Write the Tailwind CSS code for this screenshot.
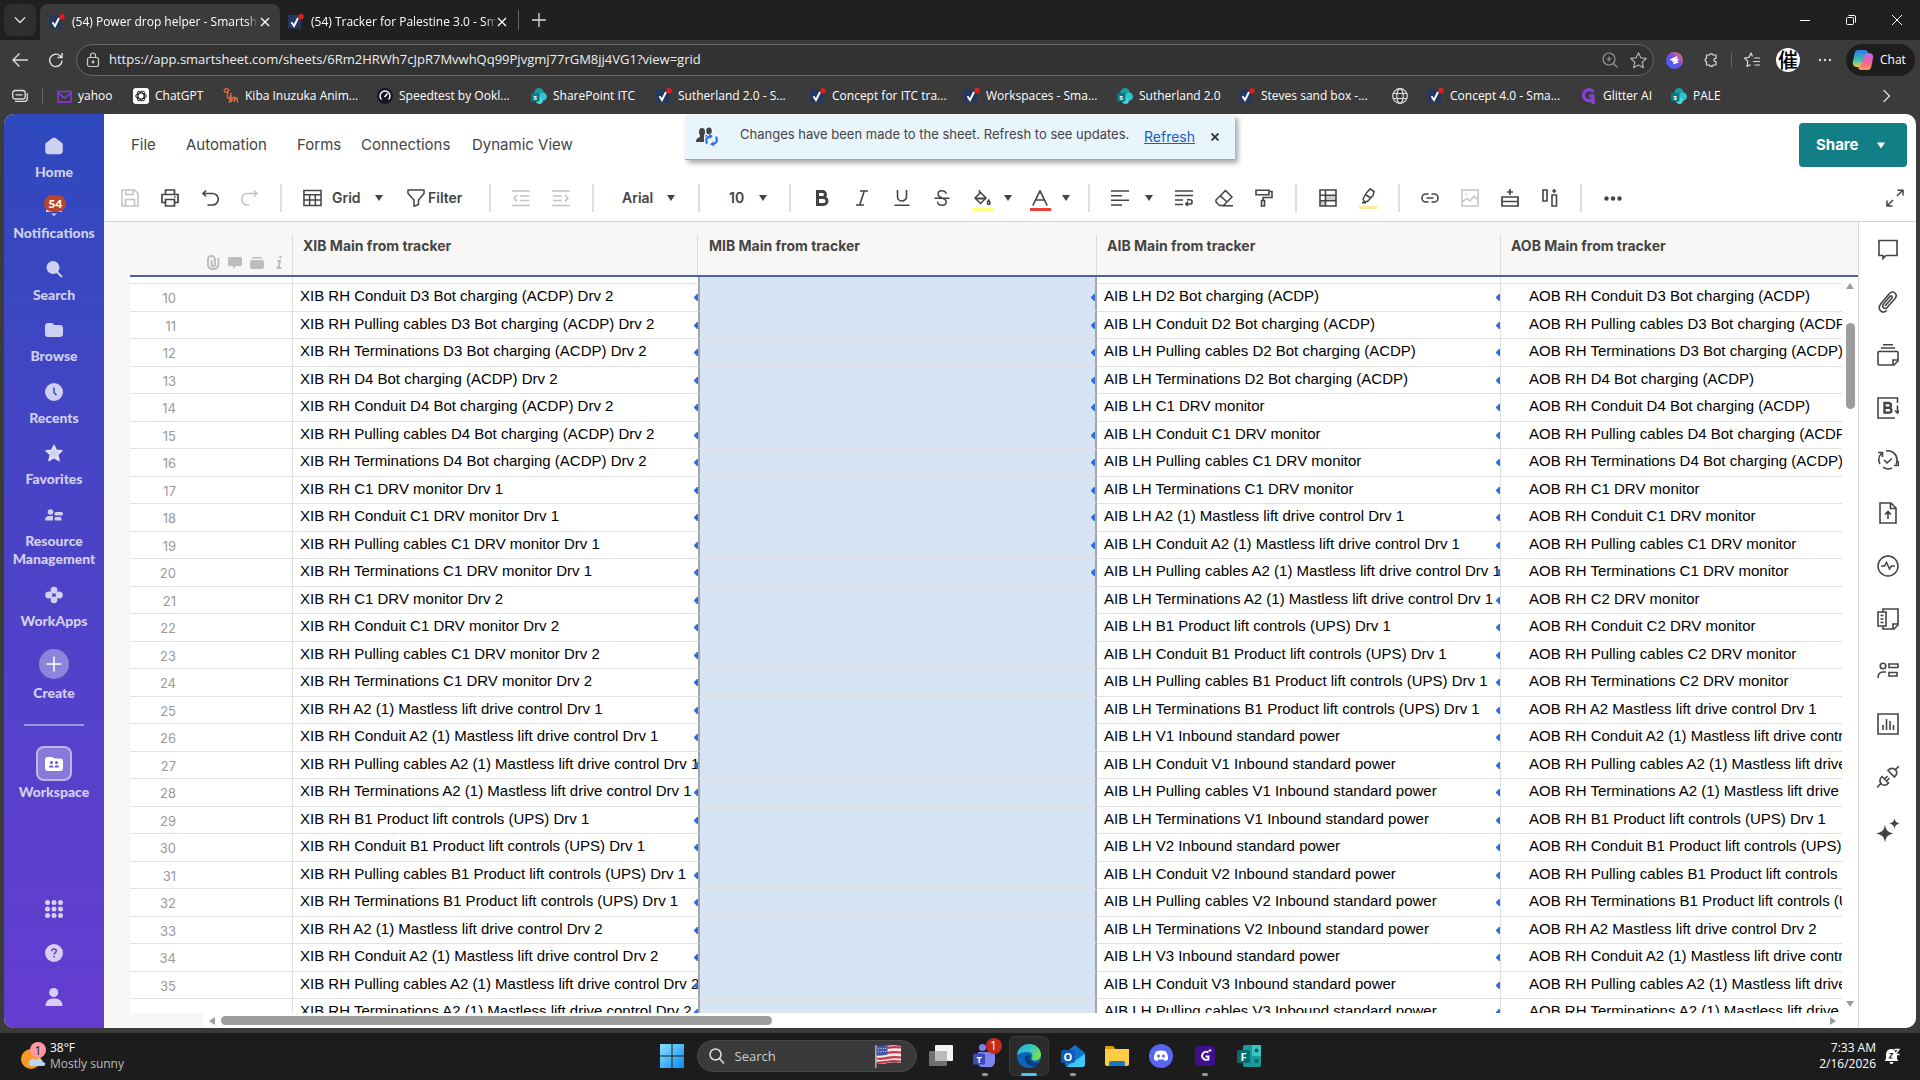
<!DOCTYPE html>
<html lang="en">
<head>
<meta charset="utf-8">
<title>(54) Power drop helper - Smartsheet</title>
<script src="https://cdn.jsdelivr.net/npm/@tailwindcss/browser@4"></script>
</head>
<body class="flex h-screen flex-col overflow-hidden bg-[#3b3b3b] font-['Open_Sans',sans-serif] text-white">

<!-- Shared symbols -->
<svg class="hidden" aria-hidden="true">
  <symbol id="smart" viewBox="0 0 16 16"><path d="M0 1h13v15l-3-1.500H0z" fill="#24385f"/><path d="M3.500 8.200 6 12l4-8" fill="none" stroke="#fff" stroke-width="1.900"/><circle cx="13" cy="2.700" r="2.700" fill="#e02020"/></symbol>
  <symbol id="sp" viewBox="0 0 16 16"><circle cx="8" cy="4.800" r="4.800" fill="#1b9aa5"/><circle cx="11.800" cy="8.600" r="4.200" fill="#2fc4cd"/><circle cx="8.500" cy="12.500" r="3.400" fill="#49d5dc"/><rect y="5" width="8.400" height="8.400" rx="1" fill="#057b86"/><text x="4.200" y="11.900" font-size="7.500" font-weight="700" text-anchor="middle" fill="#fff">s</text></symbol>
  <symbol id="caret" viewBox="0 0 8 6"><path d="M0 0h8L4 6z" fill="currentColor"/></symbol>
</svg>

<!-- Tab strip -->
<header class="flex h-10 shrink-0 bg-[#202020] text-xs">
  <button class="mt-1 ml-1 flex h-8 w-8 items-center justify-center rounded-lg bg-[#2f2f2f]" aria-label="Tab actions"><svg class="h-3 w-3" viewBox="0 0 12 12" fill="none" stroke="#ddd" stroke-width="1.400"><path d="M1 3.500 6 8.500l5-5"/></svg></button>
  <div class="mt-1 ml-1 flex w-60 items-center rounded-t-lg bg-[#3b3b3b] pr-2.5 pl-[9px]">
    <svg class="h-4 w-4 shrink-0"><use href="#smart"/></svg>
    <span class="ml-[7px] w-[186px] overflow-hidden whitespace-nowrap [mask-image:linear-gradient(90deg,#000_94%,transparent)]">(54) Power drop helper - Smartsheet</span>
    <button class="ml-auto" aria-label="Close tab"><svg class="h-2.5 w-2.5" viewBox="0 0 10 10" stroke="#fff" stroke-width="1.300"><path d="M1 1l8 8M9 1 1 9"/></svg></button>
  </div>
  <div class="mt-1 flex w-[238px] items-center border-r border-transparent pr-2.5 pl-2">
    <svg class="h-4 w-4 shrink-0"><use href="#smart"/></svg>
    <span class="ml-[7px] w-[186px] overflow-hidden whitespace-nowrap [mask-image:linear-gradient(90deg,#000_94%,transparent)]">(54) Tracker for Palestine 3.0 - Smartsheet</span>
    <button class="ml-auto" aria-label="Close tab"><svg class="h-2.5 w-2.5" viewBox="0 0 10 10" stroke="#fff" stroke-width="1.300"><path d="M1 1l8 8M9 1 1 9"/></svg></button>
  </div>
  <div class="mt-2.5 h-5 w-px bg-[#666]"></div>
  <button class="flex w-10 items-center justify-center" aria-label="New tab"><svg class="h-4 w-4" viewBox="0 0 16 16" stroke="#ddd" stroke-width="1.300"><path d="M8 1v14M1 8h14"/></svg></button>
  <div class="ml-auto flex">
    <button class="flex w-[46px] items-center justify-center" aria-label="Minimize"><svg class="h-2.5 w-2.5" viewBox="0 0 10 10" stroke="#fff"><path d="M0 5.500h10"/></svg></button>
    <button class="flex w-[46px] items-center justify-center" aria-label="Restore"><svg class="h-2.5 w-2.5" viewBox="0 0 10 10" fill="none" stroke="#fff"><rect x=".5" y="2.500" width="7" height="7" rx="1"/><path d="M2.500.5H8A1.500 1.500 0 0 1 9.500 2v5.500"/></svg></button>
    <button class="flex w-[46px] items-center justify-center" aria-label="Close window"><svg class="h-2.5 w-2.5" viewBox="0 0 10 10" stroke="#fff"><path d="M0 0l10 10M10 0 0 10"/></svg></button>
  </div>
</header>

<!-- Address row -->
<div class="flex h-10 shrink-0 items-center">
  <button class="ml-3 h-4 w-4" aria-label="Back"><svg viewBox="0 0 16 16" fill="none" stroke="#ddd" stroke-width="1.400"><path d="M16 8H1M7.500 1.500 1 8l6.500 6.500"/></svg></button>
  <button class="ml-5 h-4 w-4" aria-label="Reload"><svg viewBox="0 0 16 16" fill="none" stroke="#ddd" stroke-width="1.400"><path d="M14 8.500A6.200 6.200 0 1 1 12 3.800l2 1.700M14 1v4.500H9.500"/></svg></button>
  <div class="ml-3 flex h-8 min-w-0 flex-1 items-center rounded-full border border-[#666] bg-[#323232] pr-1.5 pl-2">
    <svg class="h-4 w-4 shrink-0" viewBox="0 0 16 16" fill="none" stroke="#ccc" stroke-width="1.200"><rect x="2.500" y="5.500" width="11" height="9" rx="2"/><path d="M5.500 5.500V3.500a2.500 2.500 0 0 1 5 0v2"/><circle cx="8" cy="10" r=".8" fill="#ccc"/></svg>
    <label class="sr-only" for="url">Address</label>
    <input id="url" class="ml-2 min-w-0 flex-1 bg-transparent text-[13px] text-[#eee] outline-none" value="https://app.smartsheet.com/sheets/6Rm2HRWh7cJpR7MvwhQq99Pjvgmj77rGM8jj4VG1?view=grid">
    <svg class="h-4 w-4" viewBox="0 0 16 16" fill="none" stroke="#999" stroke-width="1.200"><circle cx="7" cy="7" r="6"/><path d="m11.500 11.500 4 4M7 4.500v5M4.500 7h5"/></svg>
    <svg class="ml-3 h-[17px] w-[17px]" viewBox="0 0 16 16" fill="none" stroke="#aaa" stroke-width="1.200"><path d="m8 .8 2.200 4.700 5.100.6-3.800 3.500 1 5.100L8 12.200l-4.500 2.500 1-5.100L.7 6.100l5.100-.6z" stroke-linejoin="round"/></svg>
  </div>
  <svg class="ml-3 h-[17px] w-[17px]" viewBox="0 0 16 16"><defs><linearGradient id="ext" x1="1" x2="0" y2="1"><stop stop-color="#ff7a59"/><stop offset=".5" stop-color="#6f4be8"/><stop offset="1" stop-color="#2b6cff"/></linearGradient></defs><circle cx="8" cy="8" r="8" fill="url(#ext)"/><path d="m4 7.500 6.500-2.800L6 8.800l5.500-2L7 10.800l4.500-1.300" fill="none" stroke="#fff" stroke-width="1.500"/></svg>
  <svg class="ml-5 h-4 w-4" viewBox="0 0 16 16" fill="none" stroke="#ddd" stroke-width="1.200"><path d="M3.500 3h3a1.800 1.800 0 0 1 3.500 0h3v3.500a1.600 1.600 0 1 0 0 3V13h-3a1.800 1.800 0 0 1-3.500 0h-3V9.700a1.800 1.800 0 0 1 0-3.500z" stroke-linejoin="round"/></svg>
  <div class="ml-3 h-4 w-px bg-[#666]"></div>
  <svg class="ml-3 h-4 w-4" viewBox="0 0 16 16" fill="none" stroke="#ddd" stroke-width="1.200"><path d="M8.500 4.500 7 1 5 5.300.5 6l3.300 3.300L3 14.500l3.500-2" stroke-linejoin="round"/><path d="M10 6h6M9 9.500h7M10.500 13H16"/></svg>
  <span class="ml-4 flex h-6 w-6 items-center justify-center overflow-hidden rounded-full bg-white font-['Noto_Sans_CJK_SC',sans-serif] text-xl leading-6 font-medium text-black">催</span>
  <button class="ml-[18px] w-3.5" aria-label="More"><svg viewBox="0 0 14 4" fill="#ddd"><circle cx="2" cy="2" r="1.200"/><circle cx="7" cy="2" r="1.200"/><circle cx="12" cy="2" r="1.200"/></svg></button>
  <button class="mr-[5px] ml-3.5 flex h-8 w-[69px] items-center gap-1.5 rounded-full bg-[#1d1d1d] pl-1.5 text-xs">
    <svg class="h-[22px] w-[22px]" viewBox="0 0 22 22"><defs><linearGradient id="c1" y2="1" x2="0"><stop stop-color="#2b7ce9"/><stop offset=".6" stop-color="#3cc0b0"/><stop offset="1" stop-color="#f5d040"/></linearGradient><linearGradient id="c2" y2="1" x2="0"><stop stop-color="#b06bf0"/><stop offset=".5" stop-color="#f0609a"/><stop offset="1" stop-color="#ff9a4d"/></linearGradient></defs><path d="M6 1h7c2 0 2.500 1.200 3 3-2 0-3 1-3.700 3.500L10 15c-.5 2-2 3-4 3-4 0-6-2-5-6l1.500-7C3.200 2 4.200 1 6 1z" fill="url(#c1)"/><path d="M16 21H9c-2 0-2.500-1.200-3-3 2 0 3-1 3.700-3.500L12 7.500c.5-2 1.500-3.500 3.500-3.500 4.500 0 6.500 2 5.500 5l-1.500 8c-.8 3-2 4-3.500 4z" fill="url(#c2)"/></svg>Chat</button>
</div>

<!-- Bookmarks -->
<nav class="flex h-[34px] shrink-0 items-center pb-0.5 text-xs whitespace-nowrap">
  <svg class="ml-3 h-4 w-4 shrink-0" viewBox="0 0 16 16" fill="none" stroke="#ddd" stroke-width="1.300"><rect x=".7" y="2.500" width="12.500" height="8.500" rx="2.500"/><path d="M3.500 6.800h7M3 13.300h9.500a2.800 2.800 0 0 0 2.800-2.800V5"/></svg>
  <div class="mr-3.5 ml-3.5 h-4 w-px shrink-0 bg-[#666]"></div>
  <a href="#" class="flex w-[76px] items-center gap-[6px]"><svg class="h-[15px] w-[15px]" viewBox="0 0 15 15" fill="none" stroke="#a02be8" stroke-width="1.500"><path d="M1 2.500h13v10.500H1z"/><path d="m1 4 6.500 5L14 4" stroke="#6f4be8"/></svg>yahoo</a>
  <a href="#" class="flex w-[90px] items-center gap-[6px]"><svg class="h-4 w-4" viewBox="0 0 16 16"><rect width="16" height="16" rx="3" fill="#fff"/><g fill="none" stroke="#222" stroke-width="1"><ellipse cx="8" cy="8" rx="5.300" ry="3"/><ellipse cx="8" cy="8" rx="5.300" ry="3" transform="rotate(60 8 8)"/><ellipse cx="8" cy="8" rx="5.300" ry="3" transform="rotate(120 8 8)"/></g></svg>ChatGPT</a>
  <a href="#" class="flex w-[154px] items-center gap-[6px]"><svg class="h-4 w-4" viewBox="0 0 16 16" fill="none" stroke="#d2693f" stroke-width="1.500"><path d="M5 1C2 0 0 3 2 4s4-1 4-3c-1 3-3 8-1 9s3-3 3-5M6 15c1-2 1-5 2-7 .500 2 0 4 0 6 1-3 2-5 3-5s0 3 0 5c1-3 2-5 3-4s-1 4 1.500 4"/></svg>Kiba Inuzuka Anim...</a>
  <a href="#" class="flex w-[154px] items-center gap-[6px]"><svg class="h-4 w-4" viewBox="0 0 16 16" fill="none" stroke="#fff" stroke-width="1.400"><circle cx="8" cy="8" r="8" fill="#141526" stroke="none"/><path d="M4.500 11.500a5 5 0 1 1 7 0M7.500 9l3-3.500"/></svg>Speedtest by Ookl...</a>
  <a href="#" class="flex w-[125px] items-center gap-[6px]"><svg class="h-4 w-4"><use href="#sp"/></svg>SharePoint ITC</a>
  <a href="#" class="flex w-[154px] items-center gap-[6px]"><svg class="h-4 w-4"><use href="#smart"/></svg>Sutherland 2.0 - S...</a>
  <a href="#" class="flex w-[154px] items-center gap-[6px]"><svg class="h-4 w-4"><use href="#smart"/></svg>Concept for ITC tra...</a>
  <a href="#" class="flex w-[153px] items-center gap-[6px]"><svg class="h-4 w-4"><use href="#smart"/></svg>Workspaces - Sma...</a>
  <a href="#" class="flex w-[122px] items-center gap-[6px]"><svg class="h-4 w-4"><use href="#sp"/></svg>Sutherland 2.0</a>
  <a href="#" class="flex w-[153px] items-center gap-[6px]"><svg class="h-4 w-4"><use href="#smart"/></svg>Steves sand box -...</a>
  <a href="#" class="flex w-9 items-center" aria-label="Site"><svg class="h-4 w-4" viewBox="0 0 16 16" fill="none" stroke="#ddd" stroke-width="1.200"><circle cx="8" cy="8" r="7.300"/><ellipse cx="8" cy="8" rx="3.200" ry="7.300"/><path d="M1.500 5.500h13M1.500 10.500h13"/></svg></a>
  <a href="#" class="flex w-[153px] items-center gap-[6px]"><svg class="h-4 w-4"><use href="#smart"/></svg>Concept 4.0 - Sma...</a>
  <a href="#" class="flex w-[90px] items-center gap-[6px]"><svg class="h-4 w-4" viewBox="0 0 16 16" fill="none" stroke="#8b3fe0" stroke-width="3.200"><path d="M12.500 4A5.500 5.500 0 1 0 12 11V8H8M12 8v6.500h2"/></svg>Glitter AI</a>
  <a href="#" class="flex items-center gap-[6px]"><svg class="h-4 w-4"><use href="#sp"/></svg>PALE</a>
  <button class="mr-7 ml-auto" aria-label="More bookmarks"><svg class="h-3 w-3" viewBox="0 0 12 12" fill="none" stroke="#ddd" stroke-width="1.300"><path d="m3.500 0 6 6-6 6"/></svg></button>
</nav>

<!-- Page -->
<div class="mx-1 flex min-h-0 flex-1 overflow-hidden rounded-[10px] bg-white font-['Inter',sans-serif] text-[#444]">

  <aside class="flex w-[100px] shrink-0 flex-col items-center bg-linear-to-b from-[#2e48be] to-[#643cd0] pt-[17px] font-['Lato',sans-serif] text-sm leading-[18px] font-black text-white/75">
    <a href="#" class="flex h-[61px] flex-col items-center gap-2 pt-1.5"><svg class="h-[18px] w-[18px]" viewBox="0 0 18 18" fill="currentColor"><path d="M9 .5c.6 0 1 .2 1.500.6l6 4.500c.9.700 1.300 1.400 1.300 2.600v5.800c0 2-1.300 3.200-3.200 3.200H3.400C1.500 17.200.2 16 .2 14V8.200c0-1.200.4-1.900 1.300-2.600l6-4.500C8 .7 8.400.5 9 .5z"/></svg>Home</a>
    <a href="#" class="relative flex h-[62px] flex-col items-center gap-2 pt-1.5"><svg class="h-[18px] w-[18px]" viewBox="0 0 18 18" fill="currentColor"><path d="M9 0a6 6 0 0 1 6 6v3l2 3v2H1v-2l2-3V6a6 6 0 0 1 6-6zM6 15.500h6L9 18z"/></svg>Notifications<span class="absolute top-[3px] left-[31px] flex h-[17px] w-[22px] items-center justify-center rounded-full bg-[#b8452f] text-xs leading-none text-white">54</span></a>
    <a href="#" class="flex h-[61px] flex-col items-center gap-2 pt-1.5"><svg class="h-[18px] w-[18px]" viewBox="0 0 18 18" fill="currentColor"><circle cx="8" cy="7.500" r="6.500"/><path d="m12 12 4.500 4.500" stroke="currentColor" stroke-width="2" stroke-linecap="round"/></svg>Search</a>
    <a href="#" class="flex h-[62px] flex-col items-center gap-2 pt-1.5"><svg class="h-[18px] w-[18px]" viewBox="0 0 18 18" fill="currentColor"><path d="M3 2h3.500C8 2 8.500 4 10 4h5c2 0 3 1 3 3v6c0 2-1 3-3 3H3c-2 0-3-1-3-3V5c0-2 1-3 3-3z"/></svg>Browse</a>
    <a href="#" class="flex h-[61px] flex-col items-center gap-2 pt-1.5"><svg class="h-[18px] w-[18px]" viewBox="0 0 18 18"><circle cx="9" cy="9" r="9" fill="currentColor"/><path d="M9 4.500v5.300l2.500 2.500" fill="none" stroke="#3b44c3" stroke-width="1.500"/></svg>Recents</a>
    <a href="#" class="flex h-[62px] flex-col items-center gap-2 pt-1.5"><svg class="h-[18px] w-[18px]" viewBox="0 0 18 18" fill="currentColor" stroke="currentColor" stroke-width="1.500" stroke-linejoin="round"><path d="m9 1.200 2.300 5 5.700.6-4.300 3.900 1.400 5.800L9 13.500l-5.100 3 1.400-5.800L1 6.800l5.700-.6z"/></svg>Favorites</a>
    <a href="#" class="flex h-20 flex-col items-center gap-2 pt-1.5 text-center"><svg class="h-[18px] w-[18px] shrink-0" viewBox="0 0 18 18" fill="currentColor"><circle cx="5.500" cy="6" r="2.800"/><rect x="9.500" y="6" width="8.500" height="3.600" rx="1.500"/><rect x="9.500" y="11" width="7" height="3.600" rx="1.500"/><path d="M0 14c0-3 2-4 4-4h4v4.600H.6z"/></svg><span>Resource<br>Management</span></a>
    <a href="#" class="flex h-[63px] flex-col items-center gap-2 pt-1.5"><svg class="h-[18px] w-[18px]" viewBox="0 0 18 18" fill="currentColor"><circle cx="9" cy="4.200" r="3.400"/><circle cx="9" cy="13.800" r="3.400"/><circle cx="3.800" cy="9" r="3.600"/><circle cx="14.200" cy="9" r="3.600"/></svg>WorkApps</a>
    <button class="flex flex-col items-center gap-[5px] pt-1.5"><span class="flex h-[30px] w-[30px] items-center justify-center rounded-full bg-white/35"><svg class="h-4 w-4" viewBox="0 0 16 16" stroke="#fff" stroke-width="1.500" stroke-linecap="round"><path d="M8 1v14M1 8h14"/></svg></span>Create</button>
    <div class="mt-[22px] h-0.5 w-15 shrink-0 bg-white/45"></div>
    <a href="#" class="mt-5 flex flex-col items-center gap-[2px]"><span class="flex h-[35px] w-9 items-center justify-center rounded-lg border-2 border-white/45 bg-white/30"><svg class="h-[18px] w-[18px]" viewBox="0 0 18 18" fill="#fff"><path d="M3 2h3.500C8 2 8.500 3.500 10 3.500h5c2 0 3 1 3 3V13c0 2-1 3-3 3H3c-2 0-3-1-3-3V5c0-2 1-3 3-3z"/><g fill="#6d5bd0"><circle cx="6.500" cy="7.500" r="1.500"/><circle cx="11.500" cy="7.500" r="1.500"/><path d="M4 12.500c0-3 4.500-3 4.500 0zM9.500 12.500c0-3 4.500-3 4.500 0z"/></g></svg></span>Workspace</a>
    <div class="mt-auto flex flex-col items-center pb-[9px]">
      <button class="flex h-11 items-center" aria-label="Apps"><svg class="h-[18px] w-[18px]" viewBox="0 0 18 18" fill="currentColor"><g id="dots3"><circle cx="2.500" cy="2.500" r="2.500"/><circle cx="9" cy="2.500" r="2.500"/><circle cx="15.500" cy="2.500" r="2.500"/></g><use href="#dots3" y="6.500"/><use href="#dots3" y="13"/></svg></button>
      <button class="flex h-11 items-center" aria-label="Help"><svg class="h-[18px] w-[18px]" viewBox="0 0 18 18"><circle cx="9" cy="9" r="9" fill="currentColor"/><path d="M6.800 7.300c0-3 4.500-2.800 4.500-.2 0 1.700-2.200 1.600-2.200 3.300M9.100 12v1.600" fill="none" stroke="#5e3dcd" stroke-width="1.500"/></svg></button>
      <button class="flex h-11 items-center" aria-label="Account"><svg class="h-[18px] w-[18px]" viewBox="0 0 18 18" fill="currentColor"><circle cx="8.700" cy="4.500" r="4.500"/><path d="M.5 18c0-5 3-7.500 8.500-7.500s8.500 2.500 8.500 7.500z"/></svg></button>
    </div>
  </aside>

  <main class="flex min-w-0 flex-1 flex-col">
    <!-- Menu row -->
    <div class="relative flex h-[62px] shrink-0 items-center text-[15px]">
      <button class="ml-[27px] w-[55px] text-left">File</button>
      <button class="w-[111px] text-left">Automation</button>
      <button class="w-16 text-left">Forms</button>
      <button class="w-[111px] text-left">Connections</button>
      <button class="text-left">Dynamic View</button>
      <div class="absolute top-px left-1/2 ml-[-325px] flex h-[45px] w-[550px] items-center border-b border-[#9aa7ac] bg-[#e8f5fc] pl-2.5 text-[13px] whitespace-nowrap shadow-[3px_3px_5px_rgba(0,0,0,0.35)]" role="status">
        <svg class="h-5 w-[23px]" viewBox="0 0 23 20"><g fill="#444"><ellipse cx="7" cy="5" rx="3" ry="4"/><path d="M1 15c0-3.500 2-4 4-5V7h4v8z"/><ellipse cx="14" cy="4" rx="2.800" ry="3.500"/><path d="M10.500 8h7l1 2-8 3z"/></g><circle cx="16.500" cy="13" r="6.500" fill="#e8f5fc"/><path d="M12.200 16.500a4.600 4.600 0 0 1 2.800-7.300M20.800 9.800a4.600 4.600 0 0 1-2.800 7.400" fill="none" stroke="#2f6fe8" stroke-width="2.200"/><path d="m14 6.500 4 2.500-3.500 3zM19 19.500l-4-2.300 3.500-3z" fill="#2f6fe8"/></svg>
        <span class="ml-[22px] w-[404px] pb-1">Changes have been made to the sheet. Refresh to see updates.</span>
        <a href="#" class="pb-0.5 text-[14px] text-[#1d5bbf] underline">Refresh</a>
        <button class="ml-auto pr-4" aria-label="Dismiss"><svg class="h-2 w-2" viewBox="0 0 8 8" stroke="#333" stroke-width="1.800"><path d="m.5.5 7 7M7.500.5l-7 7"/></svg></button>
      </div>
      <button class="mr-[9px] ml-auto flex h-11 w-[108px] items-center rounded-[4px] bg-[#127f86] pl-[17px] text-[15px] font-bold text-white">Share<svg class="mr-[22px] ml-auto h-[7px] w-2"><use href="#caret"/></svg></button>
    </div>

    <!-- Toolbar -->
    <div class="flex h-[46px] shrink-0 items-center border-b border-[#d4d4d4] pb-px pl-1.5 text-sm font-semibold [&_svg]:shrink-0">
      <button class="flex w-10 justify-center text-[#c4c4c4]" aria-label="Save"><svg class="h-[18px] w-[18px]" viewBox="0 0 18 18" fill="none" stroke="currentColor" stroke-width="1.600"><path d="M1 1h12.500L17 4.500V17H1z"/><path d="M5 1v4.500h7V1M4.500 17v-6.500h9V17"/></svg></button>
      <button class="flex w-10 justify-center" aria-label="Print"><svg class="h-[18px] w-[18px]" viewBox="0 0 18 18" fill="none" stroke="currentColor" stroke-width="1.700"><path d="M4.500 5.500V1h9v4.500M4.500 13.500H1v-8h16v8h-3.500"/><path d="M4.500 10.500h9V17h-9z"/><path d="M13 8h1.500"/></svg></button>
      <button class="flex w-10 justify-center" aria-label="Undo"><svg class="h-[18px] w-[18px]" viewBox="0 0 18 18" fill="none" stroke="currentColor" stroke-width="1.600"><path d="M5 1.500 2 4.500l3 3M2 4.500h9.500a5.600 5.600 0 0 1 0 11.500H6.500"/></svg></button>
      <button class="flex w-10 justify-center text-[#c4c4c4]" aria-label="Redo"><svg class="h-[18px] w-[18px]" viewBox="0 0 18 18" fill="none" stroke="currentColor" stroke-width="1.600"><path d="m13 1.500 3 3-3 3M16 4.500H6.500a5.600 5.600 0 0 0 0 11.500h1.500"/></svg></button>
      <div class="mx-2.5 h-7 w-0.5 bg-[#dedede]"></div>
      <button class="ml-[11px] flex w-20 items-center"><svg class="h-[18px] w-[19px]" viewBox="0 0 20 18" fill="none" stroke="currentColor" stroke-width="1.600"><path d="M1 1h18v16H1zM1 5.500h18M1 11.200h18M7 5.500V17M13 5.500V17"/></svg><span class="ml-2.5">Grid</span><svg class="ml-auto h-[6px] w-2"><use href="#caret"/></svg></button>
      <button class="ml-6 flex w-[58px] items-center gap-[3px]"><svg class="h-[18px] w-[18px]" viewBox="0 0 18 18" fill="none" stroke="currentColor" stroke-width="1.500" stroke-linejoin="round"><path d="M1 1h16v3.500L11.500 11v4.500L7 17.200V11L1 4.500z"/></svg>Filter</button>
      <div class="mr-2.5 ml-6 h-7 w-0.5 bg-[#dedede]"></div>
      <button class="flex w-10 justify-center text-[#c4c4c4]" aria-label="Outdent"><svg class="h-[18px] w-[18px]" viewBox="0 0 18 18" fill="none" stroke="currentColor" stroke-width="1.600"><path d="M0 2h18M8 7h9M8 11.500h9M0 16.500h18M5 6 2 9.200l3 3.200"/></svg></button>
      <button class="flex w-10 justify-center text-[#c4c4c4]" aria-label="Indent"><svg class="h-[18px] w-[18px]" viewBox="0 0 18 18" fill="none" stroke="currentColor" stroke-width="1.600"><path d="M0 2h18M1 7h9M1 11.500h9M0 16.500h18M13 6l3 3.200-3 3.200"/></svg></button>
      <div class="mx-[11px] h-7 w-0.5 bg-[#dedede]"></div>
      <button class="ml-[17px] flex w-[53px] items-center justify-between">Arial<svg class="h-[6px] w-2"><use href="#caret"/></svg></button>
      <div class="mr-[11px] ml-[23px] h-7 w-0.5 bg-[#dedede]"></div>
      <button class="ml-[18px] flex w-[38px] items-center justify-between">10<svg class="h-[6px] w-2"><use href="#caret"/></svg></button>
      <div class="mr-[11px] ml-[22px] h-7 w-0.5 bg-[#dedede]"></div>
      <button class="flex w-10 justify-center" aria-label="Bold"><svg class="h-4 w-4" viewBox="0 0 16 16" fill="none" stroke="currentColor" stroke-width="3"><path d="M3.500 1.500h5a3 3 0 0 1 0 6h-5zM3.500 7.500h6a3.400 3.400 0 0 1 0 7h-6z"/></svg></button>
      <button class="flex w-10 justify-center" aria-label="Italic"><svg class="h-4 w-4" viewBox="0 0 16 16" fill="none" stroke="currentColor" stroke-width="1.600"><path d="M6 1h8M2 15h8M10.300 1 5.700 15"/></svg></button>
      <button class="flex w-10 justify-center" aria-label="Underline"><svg class="h-4 w-4" viewBox="0 0 16 16" fill="none" stroke="currentColor" stroke-width="1.600"><path d="M3.500 0v6.500a4.500 4.500 0 0 0 9 0V0M.5 15.200h15"/></svg></button>
      <button class="flex w-10 justify-center" aria-label="Strikethrough"><svg class="h-4 w-4" viewBox="0 0 16 16" fill="none" stroke="currentColor" stroke-width="1.500"><path d="M12 4c0-2-1.500-3.200-4-3.200S4 2 4 4s1.500 3 4 4 4.300 1.500 4.300 3.800S10.500 15.200 8 15.200 3.600 14 3.600 11.800M.5 8.200h15"/></svg></button>
      <button class="flex w-10 flex-col items-center gap-[2px] pt-1" aria-label="Fill colour"><svg class="h-4 w-[18px]" viewBox="0 0 18 16" fill="none" stroke="currentColor" stroke-width="1.500"><path d="M6.500 0v3M7.500 2.500 13 8l-5.500 5.500L2 8z"/><path d="M2.500 8.500h10" stroke-width="2"/><path d="M15.700 10c2 3 1.200 4.500 0 4.500s-2-1.500 0-4.500z"/></svg><span class="h-[3px] w-[21px] bg-[#ffff85]"></span></button>
      <svg class="ml-0.5 h-[6px] w-2"><use href="#caret"/></svg>
      <button class="ml-2 flex w-10 flex-col items-center gap-[2px] pt-1" aria-label="Text colour"><svg class="h-4 w-4" viewBox="0 0 16 16" fill="none" stroke="currentColor" stroke-width="1.600"><path d="M.8 15.500 8 .8l7.200 14.700M3.500 10h9"/></svg><span class="h-[3px] w-[21px] bg-[#ee4035]"></span></button>
      <svg class="ml-0.5 h-[6px] w-2"><use href="#caret"/></svg>
      <div class="mr-2.5 ml-[18px] h-7 w-0.5 bg-[#dedede]"></div>
      <button class="flex w-10 justify-center" aria-label="Align"><svg class="h-4 w-[18px]" viewBox="0 0 18 16" stroke="currentColor" stroke-width="1.600"><path d="M0 1h18M0 5.700h11M0 10.300h18M0 15h11"/></svg></button>
      <svg class="ml-[5px] h-[6px] w-2"><use href="#caret"/></svg>
      <button class="ml-[11px] flex w-10 justify-center" aria-label="Wrap text"><svg class="h-4 w-[18px]" viewBox="0 0 18 16" fill="none" stroke="currentColor" stroke-width="1.600"><path d="M0 1h18M0 5.500h18M0 10h8M0 14.500h8M12 9.800h3a2 2 0 0 1 0 4.200h-4M13 11.500 10.800 14l2.200 2"/></svg></button>
      <button class="flex w-10 justify-center" aria-label="Clear format"><svg class="h-[18px] w-[18px]" viewBox="0 0 18 18" fill="none" stroke="currentColor" stroke-width="1.500" stroke-linejoin="round"><path d="M10.500 1.500 17 8l-8.500 8.500h-4L1 13v-2zM5.500 7l6.500 6M7 16.800h11"/></svg></button>
      <button class="flex w-10 justify-center" aria-label="Format painter"><svg class="h-[18px] w-[18px]" viewBox="0 0 18 18" fill="none" stroke="currentColor" stroke-width="1.600"><path d="M1 1.200h13v4.500H1zM14 2.500h3v6H8v3M6.500 11.500h3v5.500h-3z"/></svg></button>
      <div class="mx-[11px] h-7 w-0.5 bg-[#dedede]"></div>
      <button class="flex w-10 justify-center" aria-label="Conditional formatting"><svg class="h-[18px] w-[18px]" viewBox="0 0 18 18" fill="none" stroke="currentColor" stroke-width="1.600"><path d="M6 6h11v6H6zM1 12h5v5H1z" fill="#ccc" stroke="none"/><path d="M1 1h16v16H1zM1 6.300h16M1 11.700h16M6.500 1v16"/></svg></button>
      <button class="flex w-10 flex-col items-center gap-[2px]" aria-label="Highlight changes"><svg class="h-4 w-4" viewBox="0 0 16 16" fill="none" stroke="currentColor" stroke-width="1.500" stroke-linejoin="round"><path d="m10 1 4 2.500-1 4-5.500 6H4l-1-2.500L6 5.500zM6 7l5 3M2 14.800h4"/></svg><span class="h-[3px] w-[18px] bg-[#fbeaa0]"></span></button>
      <div class="mr-2.5 ml-2.5 h-7 w-0.5 bg-[#dedede]"></div>
      <button class="flex w-10 justify-center" aria-label="Link"><svg class="h-[10px] w-[18px]" viewBox="0 0 18 10" fill="none" stroke="currentColor" stroke-width="1.600"><path d="M7.500 1H5a4 4 0 0 0 0 8h2.500M10.500 1H13a4 4 0 0 1 0 8h-2.500M5.500 5h7"/></svg></button>
      <button class="flex w-10 justify-center text-[#c4c4c4]" aria-label="Image"><svg class="h-[18px] w-[18px]" viewBox="0 0 18 18" fill="none" stroke="currentColor" stroke-width="1.500"><path d="M1 1h16v16H1zM1 13l5-3.500 3 2.500 4-5 4 4M4.500 5.500H6"/></svg></button>
      <button class="flex w-10 justify-center" aria-label="Insert row"><svg class="h-[18px] w-[18px]" viewBox="0 0 18 18" fill="none" stroke="currentColor" stroke-width="1.700"><path d="M1 8h16v9H1zM1 12.500h16M9 0v6M6 3h6"/></svg></button>
      <button class="flex w-10 justify-center" aria-label="Insert column"><svg class="h-[18px] w-[18px]" viewBox="0 0 18 18" fill="none" stroke="currentColor" stroke-width="1.600"><path d="M2 1h4v11H2zM11 6h4.500v11H11zM13.200 0v4M11.200 2h4"/></svg></button>
      <div class="mr-[11px] ml-2.5 h-7 w-0.5 bg-[#dedede]"></div>
      <button class="flex w-10 justify-center" aria-label="More"><svg class="h-[5px] w-[18px]" viewBox="0 0 18 5" fill="currentColor"><circle cx="2.500" cy="2.500" r="2.200"/><circle cx="9" cy="2.500" r="2.200"/><circle cx="15.500" cy="2.500" r="2.200"/></svg></button>
      <button class="mr-px ml-auto flex w-10 justify-center" aria-label="Full screen"><svg class="h-[18px] w-[18px]" viewBox="0 0 18 18" fill="none" stroke="currentColor" stroke-width="1.500"><path d="m11 7 5.500-5.500M11.500 1.200H17v5.300M7 11l-5.500 5.500M1 11.500V17h5.500"/></svg></button>
    </div>

    <div class="flex min-h-0 flex-1">
      <!-- Grid -->
      <section class="flex min-w-0 flex-1 flex-col border-r border-[#d9d9d9]">
        <div class="relative min-h-0 flex-1 overflow-hidden bg-[#f8f7f6] pl-[26px]">
          <table class="w-full table-fixed border-separate border-spacing-0 bg-white">
            <colgroup><col class="w-[163px]"><col class="w-[405px]"><col class="w-[399px]"><col class="w-[404px]"><col><col class="w-4"></colgroup>
            <thead>
              <tr class="h-[55px] bg-[#f8f7f6] text-left align-bottom text-sm leading-[22px] font-semibold">
                <th class="border-b-2 border-[#4a63a3] p-0"><div class="flex h-10 items-end justify-end gap-2 border-r border-[#dcdcdc] pr-1.5 pb-[5px] text-[#bdbdbd]">
                  <svg class="h-[15px] w-3.5" viewBox="0 0 14 15" fill="none" stroke="currentColor" stroke-width="2"><path d="M5.500 5v4.500a1.700 1.700 0 0 0 3.400 0V4.500a3.500 3.500 0 0 0-7 0v5A4.500 4.500 0 0 0 6.500 14c3.500 0 5.900-1.500 5.900-5V3"/></svg>
                  <svg class="h-[15px] w-3.5" viewBox="0 0 14 15" fill="currentColor"><path d="M1.500 2h11A1.500 1.500 0 0 1 14 3.500v6a1.500 1.500 0 0 1-1.500 1.500H8l-3 3v-3H1.500A1.500 1.500 0 0 1 0 9.500v-6A1.500 1.500 0 0 1 1.500 2z"/></svg>
                  <svg class="h-[15px] w-3.5" viewBox="0 0 14 15" fill="currentColor"><rect x="2" y="2" width="10" height="1.500"/><rect y="5" width="14" height="9" rx="2"/></svg>
                  <svg class="h-[15px] w-3.5" viewBox="0 0 14 15" fill="none" stroke="currentColor" stroke-width="2"><path d="M5.500 6H8l-1.500 7M4.500 13h5M8.500 1v2.500"/></svg>
                </div></th>
                <th class="border-b-2 border-[#4a63a3] p-0"><div class="h-10 border-r border-[#dcdcdc] pl-2.5">XIB Main from tracker</div></th>
                <th class="border-b-2 border-[#4a63a3] p-0"><div class="h-10 border-r border-[#dcdcdc] pl-[11px]">MIB Main from tracker</div></th>
                <th class="border-b-2 border-[#4a63a3] p-0"><div class="h-10 border-r border-[#dcdcdc] pl-2.5">AIB Main from tracker</div></th>
                <th class="border-b-2 border-[#4a63a3] p-0"><div class="h-10 pl-2.5">AOB Main from tracker</div></th>
                <td class="border-b-2 border-[#4a63a3] p-0"></td>
              </tr>
            </thead>
            <tbody id="rows" class="font-['Liberation_Sans',sans-serif] text-[15px] leading-[23px] whitespace-nowrap text-black"></tbody>
          </table>
          <div class="absolute top-[55px] right-0 bottom-0 flex w-4 flex-col items-center bg-white pt-[6px] pb-1.5 text-[#9d9d9d]">
            <svg class="h-[6px] w-2 rotate-180"><use href="#caret"/></svg>
            <div class="mt-[34px] h-[86px] w-[9px] rounded-full bg-[#9d9d9d]"></div>
            <svg class="mt-auto h-[6px] w-2"><use href="#caret"/></svg>
          </div>
        </div>
        <div class="flex h-[15px] shrink-0 items-center text-[#9d9d9d]">
          <div class="h-full w-[99px] bg-[#f8f7f6]"></div>
          <svg class="ml-1.5 h-2 w-[6px]" viewBox="0 0 6 8" fill="currentColor"><path d="M6 0v8L0 4z"/></svg>
          <div class="ml-[6px] h-[9px] w-[551px] rounded-full bg-[#9d9d9d]"></div>
          <svg class="mr-[22px] ml-auto h-2 w-[6px]" viewBox="0 0 6 8" fill="currentColor"><path d="M0 0v8l6-4z"/></svg>
        </div>
      </section>

      <!-- Right rail -->
      <nav class="w-[57px] shrink-0 pt-px">
        <div class="flex h-[633px] flex-col items-center [&_button]:flex [&_button]:flex-1 [&_button]:items-center [&_svg]:h-[22px] [&_svg]:w-[22px]">
          <button aria-label="Conversations"><svg viewBox="0 0 22 22" fill="none" stroke="currentColor" stroke-width="1.600"><path d="M2 2.500h18v15H9l-3 3v-3H2z"/></svg></button>
          <button aria-label="Attachments"><svg viewBox="0 0 22 22" fill="none" stroke="currentColor" stroke-width="1.600"><path d="m8 15 6.500-7.500c1.500-1.800 0-3.500-1.800-2L6.500 13c-2.500 3.500 1.500 6 3.800 3.300L18 7.500C21.500 3 16-1 12.500 2.500L4 12.500C-.5 18.500 5 23.500 10 19.500"/></svg></button>
          <button aria-label="Proofs"><svg viewBox="0 0 22 22" fill="none" stroke="currentColor" stroke-width="1.600"><path d="M6 .8h10M4 4h14M2 7.500h18a1 1 0 0 1 1 1V17l-4 4H2a1 1 0 0 1-1-1V8.500a1 1 0 0 1 1-1zM21 16h-5v5"/></svg></button>
          <button aria-label="Brandfolder"><svg viewBox="0 0 22 22" fill="none" stroke="currentColor" stroke-width="1.600"><path d="M20.500 6V1H1v20h17M20.500 8.500v7M18 13.500l2.500 2.500 2-2.500"/><path d="M7.500 6h4a2.200 2.200 0 0 1 0 4.800h-4zM7.500 10.800h4.500a2.300 2.300 0 0 1 0 4.800H7.500z" stroke-width="2.400"/></svg></button>
          <button aria-label="Update requests"><svg viewBox="0 0 22 22" fill="none" stroke="currentColor" stroke-width="1.600"><path d="M3 15A9 9 0 0 1 4.500 4.500M1 3.500h4.500V8M9 2a9 9 0 0 1 11 9 9 9 0 0 1-1 4.500M21.500 12v4.500H17M15 19a9 9 0 0 1-9-.8M7 11l3 3 5-4.500"/></svg></button>
          <button aria-label="Publish"><svg viewBox="0 0 22 22" fill="none" stroke="currentColor" stroke-width="1.600"><path d="M3 1h11l5 5v15H3zM13.500 1v5.500H19M11 17V10M8 12.500l3-3 3 3"/></svg></button>
          <button aria-label="Activity log"><svg viewBox="0 0 22 22" fill="none" stroke="currentColor" stroke-width="1.500"><circle cx="11" cy="11" r="10"/><path d="M4 11h3.500l2-3.500 3 6.500 2-3H18"/></svg></button>
          <button aria-label="Summary"><svg viewBox="0 0 22 22" fill="none" stroke="currentColor" stroke-width="1.600"><path d="M1 4h8v14H1zM3.500 7.500h3M3.500 11h3M3.500 14.500h3M6 4V1h15v16l-4 4H6v-3M21 16h-5v5"/></svg></button>
          <button aria-label="Resources"><svg viewBox="0 0 22 22" fill="none" stroke="currentColor" stroke-width="1.600"><circle cx="6" cy="6" r="2.800"/><path d="M1 18c0-4 1.500-6 5-6h3M12 4h9v3.500h-9zM12 12.500h8V16h-8z"/></svg></button>
          <button aria-label="Charts"><svg viewBox="0 0 22 22" fill="none" stroke="currentColor" stroke-width="1.600"><path d="M1 1h20v20H1zM6 17v-5M9.500 17V6M13 17V8M16.500 17v-5"/></svg></button>
          <button aria-label="Connectors"><svg viewBox="0 0 22 22" fill="none" stroke="currentColor" stroke-width="1.600"><path d="m0 21.500 4-4M22 0l-4 4M5 10.500l6.500 6.500c-2 2.500-5 3-7 1s-2.500-5 .5-7.500zM11 4.500l6.500 6.500c2.500-2.500 3-5 1-7s-5-2.500-7.500.500zM7.500 13l3-3M9.500 15l3-3"/></svg></button>
          <button aria-label="AI tools"><svg class="overflow-visible" viewBox="0 0 22 22" fill="currentColor"><path d="M8 5.500c1 6 2.500 7.500 8.500 9C10.500 16 9 17.500 8 23.500c-1-6-2.500-7.500-9-9C5.500 13 7 11.500 8 5.500zM17.500-1c.6 3.600 1.600 4.600 5.500 5.500-3.900.9-4.900 1.900-5.500 5.500-.6-3.600-1.600-4.600-5.500-5.500 3.900-.9 4.900-1.900 5.500-5.500z"/></svg></button>
        </div>
      </nav>
    </div>
  </main>
</div>

<!-- Taskbar -->
<footer class="mt-[5px] grid h-[47px] shrink-0 grid-cols-[1fr_auto_1fr] items-center bg-[#1c1c1c] pb-0.5 text-xs leading-4">
  <button class="flex items-center gap-1 pl-5 text-left"><svg class="h-7 w-[26px]" viewBox="0 0 26 28"><circle cx="11" cy="17" r="10" fill="#f59a23"/><path d="M9 21a4 4 0 0 1 7-3 4 4 0 0 1 7 2c3 0 3 4 0 4H12c-3 0-4-2-3-3z" fill="#b9d4f5"/><circle cx="18" cy="8" r="8" fill="#ff99a0"/><text x="18" y="12.500" font-size="12" text-anchor="middle" fill="#222">1</text></svg><span>38°F<br><span class="text-[#bbb]">Mostly sunny</span></span></button>
  <div class="flex items-center">
    <button class="flex w-11 justify-center" aria-label="Start"><svg class="h-6 w-6" viewBox="0 0 24 24"><defs><linearGradient id="win" x2="1" y2="1"><stop stop-color="#8be0ff"/><stop offset="1" stop-color="#0a8cf5"/></linearGradient></defs><path d="M0 0h11.500v11.500H0zM12.500 0H24v11.500H12.500zM0 12.500h11.500V24H0zM12.500 12.500H24V24H12.500z" fill="url(#win)"/></svg></button>
    <div class="ml-[3px] flex h-8 w-[220px] items-center rounded-full border border-[#4a4a4a] bg-[#3a3a3a] pr-[15px] pl-[11px]">
      <svg class="h-4 w-4 shrink-0" viewBox="0 0 16 16" fill="none" stroke="#ddd" stroke-width="1.500"><circle cx="6.500" cy="6.500" r="5.500"/><path d="m10.500 10.500 4.500 5"/></svg>
      <label class="sr-only" for="tsearch">Search</label>
      <input id="tsearch" class="ml-2.5 w-32 min-w-0 bg-transparent text-[13px] outline-none placeholder:text-[#ccc]" placeholder="Search">
      <svg class="ml-auto h-6 w-[26px]" viewBox="0 0 26 24"><path d="M0 1h1.500v23H0z" fill="#aaa"/><path d="M1.500 2c6 3 10-3 24.500 0v17C14 16 10 22 1.500 19z" fill="#f3e9e9"/><path d="M2 4.500c8 2 10-3 24-1M2 9.500c8 2 10-3 24-1M2 14.500c8 2 10-3 24-1M2 18.500c8 1 11-3 24-1" fill="none" stroke="#c8354a" stroke-width="2.200"/><path d="M1.500 1.500c4 1.500 7 0 11-1v10c-4 1-7 1.500-11 1z" fill="#4757a5"/><path d="M3 4.500h9M3 7.500h9" stroke="#cdd3f0" stroke-dasharray="1 1.500"/></svg>
    </div>
    <button class="ml-[2px] flex h-10 w-11 items-center justify-center" aria-label="Task view"><svg class="h-6 w-6" viewBox="0 0 24 24"><rect y="7" width="18" height="15" rx="1" fill="#707070"/><rect x="6" y="1" width="18" height="16" rx="1" fill="#f3f3f3"/><rect x="6" y="7" width="12" height="10" fill="#bbb"/></svg></button>
    <button class="relative flex h-10 w-11 items-center justify-center" aria-label="Teams"><svg class="h-6 w-6" viewBox="0 0 24 24"><circle cx="9.500" cy="3.500" r="3.500" fill="#7c83e8"/><circle cx="18" cy="6" r="3" fill="#5058c8"/><path d="M5 8h17v9a6 6 0 0 1-8 6H9a5 5 0 0 1-4-5z" fill="#7f85f0"/><rect y="9.500" width="12" height="11" rx="1.500" fill="#4048b8"/><text x="6" y="18.500" font-size="9" font-weight="700" text-anchor="middle" fill="#fff">T</text></svg><span class="absolute top-0.5 right-[5px] flex h-4 w-4 items-center justify-center rounded-full bg-[#c42b1c]">1</span><span class="absolute bottom-0 left-[19px] h-[3px] w-1.5 rounded-full bg-[#999]"></span></button>
    <button class="relative flex h-10 w-11 items-center justify-center" aria-label="Edge"><span class="absolute inset-x-0.5 inset-y-0 rounded-md border border-[#383838] bg-[#2b2b2b]"></span><svg class="relative h-6 w-6" viewBox="0 0 24 24"><defs><linearGradient id="ed" x2="1" y2=".5"><stop stop-color="#2aa7e0"/><stop offset=".6" stop-color="#35c8c0"/><stop offset="1" stop-color="#73e050"/></linearGradient></defs><circle cx="12" cy="12" r="12" fill="#1163b8"/><path d="M0 11C1 4 6 0 12 0c7 0 12 5 12 10.500 0 4-3 6-6 6-2.500 0-4-1-3.500-2.500 2-2 .5-6-4-6-4 0-8 1-10.500 3z" fill="url(#ed)"/><path d="M8 13c-1 5 3 9 8 9 3 0 5-1.500 6.500-3.500-3 1-7 .5-9-2.500-1.200-1.800-.5-3 .5-4-2-2-5.500-1-6 1z" fill="#0b3d80"/></svg><span class="absolute bottom-0 left-3.5 h-[3px] w-4 rounded-full bg-[#4cc2ff]"></span></button>
    <button class="relative flex h-10 w-11 items-center justify-center" aria-label="Outlook"><svg class="h-6 w-6" viewBox="0 0 24 24"><path d="M4 9 14 1l10 8v11a3 3 0 0 1-3 3H7a3 3 0 0 1-3-3z" fill="#1272d0"/><path d="m6 22 18-12v10a3 3 0 0 1-3 3H7z" fill="#3cc8f5"/><rect y="6" width="14" height="13" rx="2" fill="#0b5cb5"/><text x="7" y="16.500" font-size="11" font-weight="700" text-anchor="middle" fill="#fff">O</text></svg><span class="absolute bottom-0 left-[19px] h-[3px] w-1.5 rounded-full bg-[#999]"></span></button>
    <button class="flex h-10 w-11 items-center justify-center" aria-label="File Explorer"><svg class="h-6 w-6" viewBox="0 0 24 24"><path d="M0 3a1 1 0 0 1 1-1h7l2.500 3H0z" fill="#e09a10"/><path d="M0 5h24v15a2 2 0 0 1-2 2H2a2 2 0 0 1-2-2z" fill="#ffcc45"/><path d="M4 22v-3a2 2 0 0 1 2-2h12a2 2 0 0 1 2 2v3z" fill="#1878c8"/></svg></button>
    <button class="flex h-10 w-11 items-center justify-center" aria-label="Discord"><svg class="h-6 w-6" viewBox="0 0 24 24"><circle cx="12" cy="12" r="12" fill="#5865f2"/><path d="M7 7.500c3-1.500 7-1.500 10 0 1.500 2.500 2.200 5 2 8-1 .8-2 1.300-3.300 1.500l-1-1.500H9.300l-1 1.500C7 16.800 6 16.300 5 15.500c-.2-3 .5-5.500 2-8z" fill="#fff"/><circle cx="9.500" cy="12" r="1.500" fill="#5865f2"/><circle cx="14.500" cy="12" r="1.500" fill="#5865f2"/></svg></button>
    <button class="relative flex h-10 w-11 items-center justify-center" aria-label="Glitter AI"><svg class="h-5 w-5" viewBox="0 0 20 20"><rect width="20" height="20" rx="4" fill="#3f0f8f"/><path d="M13.500 6.500a4 4 0 1 0 0 6.500v-2.500H10.500M13.500 10.500v4" fill="none" stroke="#fff" stroke-width="1.800"/><path d="M15 3v3M13.500 4.500h3" stroke="#fff"/></svg><span class="absolute bottom-0 left-[19px] h-[3px] w-1.5 rounded-full bg-[#999]"></span></button>
    <button class="flex h-10 w-11 items-center justify-center" aria-label="Forms"><svg class="h-6 w-6" viewBox="0 0 24 24"><rect x="6" y="1" width="18" height="22" rx="2" fill="#199a9c"/><path d="M15 1h9v11h-9z" fill="#38c5c0"/><circle cx="19.500" cy="6.500" r="2" fill="#0d5e63"/><circle cx="19.500" cy="17" r="2" fill="#0d5e63"/><rect y="6" width="13" height="13" rx="1.500" fill="#0b6a70"/><text x="6.500" y="16.500" font-size="11" font-weight="700" text-anchor="middle" fill="#fff">F</text></svg></button>
  </div>
  <div class="flex items-center justify-end gap-2 pr-5"><span class="text-right">7:33 AM<br>2/16/2026</span><svg class="h-4 w-4" viewBox="0 0 16 16"><path d="M2 11V6a5.500 5.500 0 0 1 8-4.500L13 7v4l1.500 2h-14zM5.500 14h4a2 2 0 0 1-4 0z" fill="#fff"/><path d="M5.500 5.500h3l-3 4.500h3" fill="none" stroke="#222" stroke-width="1.200"/><path d="M10.500 1.500H15l-4 5h4.500" fill="none" stroke="#fff" stroke-width="1.300"/></svg></div>
</footer>

<script>
  const xib = ["Conduit D3 Bot charging (ACDP) Drv 2","Pulling cables D3 Bot charging (ACDP) Drv 2","Terminations D3 Bot charging (ACDP) Drv 2","D4 Bot charging (ACDP) Drv 2","Conduit D4 Bot charging (ACDP) Drv 2","Pulling cables D4 Bot charging (ACDP) Drv 2","Terminations D4 Bot charging (ACDP) Drv 2","C1 DRV monitor Drv 1","Conduit C1 DRV monitor Drv 1","Pulling cables C1 DRV monitor Drv 1","Terminations C1 DRV monitor Drv 1","C1 DRV monitor Drv 2","Conduit C1 DRV monitor Drv 2","Pulling cables C1 DRV monitor Drv 2","Terminations C1 DRV monitor Drv 2","A2 (1) Mastless lift drive control Drv 1","Conduit A2 (1) Mastless lift drive control Drv 1","Pulling cables A2 (1) Mastless lift drive control Drv 1","Terminations A2 (1) Mastless lift drive control Drv 1","B1 Product lift controls (UPS) Drv 1","Conduit B1 Product lift controls (UPS) Drv 1","Pulling cables B1 Product lift controls (UPS) Drv 1","Terminations B1 Product lift controls (UPS) Drv 1","A2 (1) Mastless lift drive control Drv 2","Conduit A2 (1) Mastless lift drive control Drv 2","Pulling cables A2 (1) Mastless lift drive control Drv 2","Terminations A2 (1) Mastless lift drive control Drv 2"];
  const aib = ["D2 Bot charging (ACDP)","Conduit D2 Bot charging (ACDP)","Pulling cables D2 Bot charging (ACDP)","Terminations D2 Bot charging (ACDP)","C1 DRV monitor","Conduit C1 DRV monitor","Pulling cables C1 DRV monitor","Terminations C1 DRV monitor","A2 (1) Mastless lift drive control Drv 1","Conduit A2 (1) Mastless lift drive control Drv 1","Pulling cables A2 (1) Mastless lift drive control Drv 1","Terminations A2 (1) Mastless lift drive control Drv 1","B1 Product lift controls (UPS) Drv 1","Conduit B1 Product lift controls (UPS) Drv 1","Pulling cables B1 Product lift controls (UPS) Drv 1","Terminations B1 Product lift controls (UPS) Drv 1","V1 Inbound standard power","Conduit V1 Inbound standard power","Pulling cables V1 Inbound standard power","Terminations V1 Inbound standard power","V2 Inbound standard power","Conduit V2 Inbound standard power","Pulling cables V2 Inbound standard power","Terminations V2 Inbound standard power","V3 Inbound standard power","Conduit V3 Inbound standard power","Pulling cables V3 Inbound standard power"];
  const aob = ["Conduit D3 Bot charging (ACDP)","Pulling cables D3 Bot charging (ACDP)","Terminations D3 Bot charging (ACDP)","D4 Bot charging (ACDP)","Conduit D4 Bot charging (ACDP)","Pulling cables D4 Bot charging (ACDP)","Terminations D4 Bot charging (ACDP)","C1 DRV monitor","Conduit C1 DRV monitor","Pulling cables C1 DRV monitor","Terminations C1 DRV monitor","C2 DRV monitor","Conduit C2 DRV monitor","Pulling cables C2 DRV monitor","Terminations C2 DRV monitor","A2 Mastless lift drive control Drv 1","Conduit A2 (1) Mastless lift drive control Drv 1","Pulling cables A2 (1) Mastless lift drive control Drv 1","Terminations A2 (1) Mastless lift drive control Drv 1","B1 Product lift controls (UPS) Drv 1","Conduit B1 Product lift controls (UPS) Drv 1","Pulling cables B1 Product lift controls (UPS) Drv 1","Terminations B1 Product lift controls (UPS) Drv 1","A2 Mastless lift drive control Drv 2","Conduit A2 (1) Mastless lift drive control Drv 2","Pulling cables A2 (1) Mastless lift drive control Drv 2","Terminations A2 (1) Mastless lift drive control Drv 2"];
  const mark = '<svg class="absolute top-[10px] right-0 h-[7px] w-1" viewBox="0 0 4 7"><path d="M4 0v7H3L0 4V3l3-3z" fill="#2b6fe8"/></svg>';
  const row = (h, n, a, b, c, m, mm) => `<tr class="${h}">
    <td class="border-r border-b border-[#e1e1e1] p-0 align-top"><div class="h-0 w-[46px] text-right font-['Inter',sans-serif] text-[13px] leading-[29px] text-[#9a9a9a]">${n}</div></td>
    <td class="relative border-b border-[#e1e1e1] p-0 pl-[7px] align-top">${a}${m}</td>
    <td class="relative border-r-2 border-b border-l-2 border-r-[#a6a6a6] border-b-[#dfe2e6] border-l-[#a6a6a6] bg-[#d7e4f4] p-0">${mm}</td>
    <td class="relative border-r border-b border-[#e1e1e1] p-0 pl-[7px] align-top">${b}${m}</td>
    <td class="overflow-hidden border-b border-[#e1e1e1] p-0 pl-7 align-top">${c}</td><td class="p-0"></td></tr>`;
  let html = row("h-[7px]", "", "", "", "", "", "");
  xib.forEach((x, i) => {
    html += row(i % 2 ? "h-[27px]" : "h-[28px]", i < 26 ? i + 10 : "", "XIB RH " + x, "AIB LH " + aib[i], "AOB RH " + aob[i], mark, i < 11 ? mark : "");
  });
  document.getElementById("rows").innerHTML = html;
</script>
</body>
</html>
